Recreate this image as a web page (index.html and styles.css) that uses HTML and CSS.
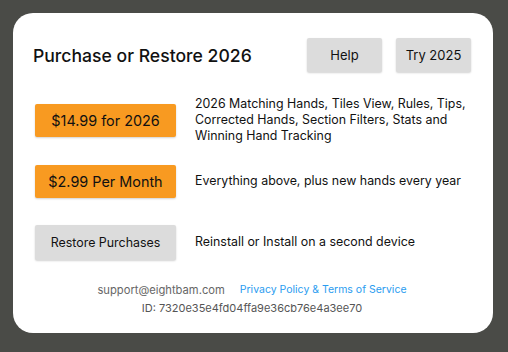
FILE: index.html
```html
<!DOCTYPE html>
<html>
<head>
<meta charset="utf-8">
<link rel="stylesheet" href="styles.css">
</head>
<body>
<div class="modal">
  <div class="header">
    <h1 class="title">Purchase or Restore 2026</h1>
    <div class="header-actions">
      <button class="btn btn-gray btn-small">Help</button>
      <button class="btn btn-gray btn-small">Try 2025</button>
    </div>
  </div>
  <div class="rows">
    <div class="row">
      <button class="btn btn-orange">$14.99 for 2026</button>
      <p class="desc">2026 Matching Hands, Tiles View, Rules, Tips, Corrected Hands, Section Filters, Stats and Winning Hand Tracking</p>
    </div>
    <div class="row">
      <button class="btn btn-orange">$2.99 Per Month</button>
      <p class="desc">Everything above, plus new hands every year</p>
    </div>
    <div class="row">
      <button class="btn btn-gray btn-restore">Restore Purchases</button>
      <p class="desc">Reinstall or Install on a second device</p>
    </div>
  </div>
  <div class="footer">
    <div class="footer-links">
      <span class="support">support@eightbam.com</span>
      <a class="policy" href="#">Privacy Policy &amp; Terms of Service</a>
    </div>
    <div class="device-id">ID: 7320e35e4fd04ffa9e36cb76e4a3ee70</div>
  </div>
</div>
</body>
</html>
```
FILE: styles.css
```css
html, body {
  margin: 0;
  padding: 0;
}
body {
  width: 508px;
  height: 352px;
  background: #4a4b47;
  font-family: "Inter", sans-serif;
  overflow: hidden;
  padding-top: 13px;
  box-sizing: border-box;
}
.modal {
  margin-left: 13px;
  width: 480px;
  height: 320px;
  background: #fff;
  border-radius: 20px;
  box-sizing: border-box;
  padding: 25px 22px 0 20px;
  color: #111;
}
.header {
  display: flex;
  align-items: center;
  justify-content: space-between;
  height: 34px;
}
.title {
  margin: 0;
  font-size: 17.6px;
  font-weight: 500;
  color: #111;
}
.header-actions {
  display: flex;
  gap: 14px;
}
.btn {
  border: none;
  font-family: inherit;
  color: #111;
  border-radius: 2px;
  padding: 0;
  box-shadow: 0 1px 2px rgba(0,0,0,0.18);
}
.btn-gray {
  background: #dcdcdc;
}
.btn-small {
  width: 75px;
  height: 34px;
  font-size: 13px;
}
.btn-orange {
  background: #f89a21;
  width: 141px;
  height: 33px;
  font-size: 14.4px;
}
.btn-restore {
  width: 141px;
  height: 35px;
  font-size: 12.4px;
}
.rows {
  margin-top: 18px;
  display: flex;
  flex-direction: column;
  gap: 1px;
}
.row {
  display: flex;
  align-items: center;
  height: 60px;
  padding-left: 2px;
  gap: 19px;
  margin-right: -10px;
}
.desc {
  margin: 0;
  font-size: 12.4px;
  line-height: 16px;
  color: #111;
  flex: 1;
}
.footer {
  margin-top: 9px;
  text-align: center;
  font-size: 11px;
  line-height: 18px;
  color: #666;
}
.footer-links {
  display: flex;
  justify-content: center;
  gap: 15px;
}
.support {
  font-size: 11.2px;
}
.policy {
  color: #2a9cf0;
  text-decoration: none;
  font-size: 10.5px;
}
.device-id {
  color: #555;
}
```
